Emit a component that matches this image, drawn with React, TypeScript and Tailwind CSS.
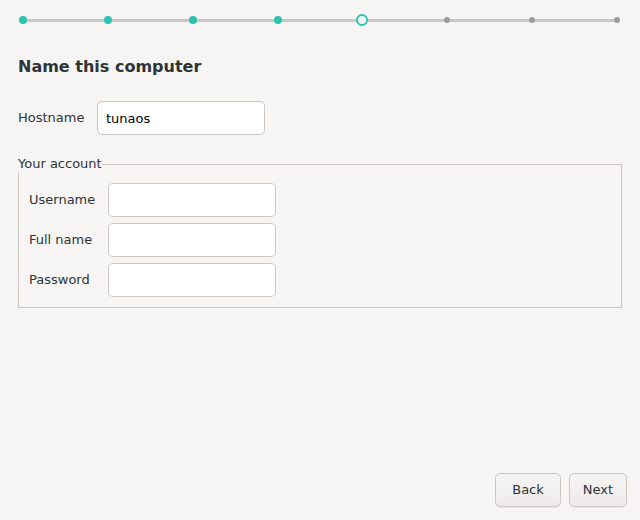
const steps = ["done", "done", "done", "done", "current", "todo", "todo", "todo"];

function Step({ state }: { state: string }) {
  return (
    <div className="flex h-[12px] w-[12px] items-center justify-center">
      {state === "done" && <div className="h-[8px] w-[8px] rounded-full bg-[#2ec4b4]" />}
      {state === "current" && (
        <div className="h-[12px] w-[12px] rounded-full border-2 border-[#2ec4b4] bg-[#f6f5f4]" />
      )}
      {state === "todo" && <div className="h-[6px] w-[6px] rounded-full bg-[#9a9a99]" />}
    </div>
  );
}

function Field({ label, value = "", type = "text" }: { label: string; value?: string; type?: string }) {
  return (
    <div className="flex items-center">
      <label className="w-[79px] text-[13px] text-[#2e3436]">{label}</label>
      <input
        type={type}
        defaultValue={value}
        className="h-[34px] w-[168px] rounded-[5px] border border-[#cdc7c2] bg-white px-[8px] text-[13px] text-black outline-none"
      />
    </div>
  );
}

export default function App() {
  return (
    <div
      className="flex h-[520px] w-[640px] flex-col bg-[#f6f5f4] text-[#2e3436]"
      style={{ fontFamily: '"DejaVu Sans", sans-serif' }}
    >
      <div className="relative mx-[17px] mt-[14px] flex items-center justify-between">
        <div className="absolute left-[6px] right-[6px] top-[5px] h-[3px] bg-[#c8c8c5]" />
        {steps.map((s, i) => (
          <div key={i} className="relative">
            <Step state={s} />
          </div>
        ))}
      </div>

      <div className="flex flex-col px-[18px]">
        <h1 className="mt-[31px] text-[16px] font-bold leading-[20px]">Name this computer</h1>

        <div className="mt-[24px]">
          <Field label="Hostname" value="tunaos" />
        </div>

        <fieldset className="mt-[21px] w-[604px] border border-[#cdc7c2] pb-[10px]">
          <legend className="-ml-[1px] text-[13px] leading-[16px]">Your account</legend>
          <div className="flex flex-col gap-[6px] pl-[10px] pt-[11px]">
            <Field label="Username" />
            <Field label="Full name" />
            <Field label="Password" type="password" />
          </div>
        </fieldset>
      </div>

      <div className="mt-auto flex justify-end gap-[8px] pb-[13px] pr-[13px]">
        <button className="h-[34px] w-[66px] rounded-[5px] border border-[#cdc7c2] bg-gradient-to-b from-[#f6f5f4] to-[#edebe9] text-[13px] text-[#2e3436] shadow-[0_1px_0_rgba(0,0,0,0.05)]">
          Back
        </button>
        <button className="h-[34px] w-[58px] rounded-[5px] border border-[#cdc7c2] bg-gradient-to-b from-[#f6f5f4] to-[#edebe9] text-[13px] text-[#2e3436] shadow-[0_1px_0_rgba(0,0,0,0.05)]">
          Next
        </button>
      </div>
    </div>
  );
}
